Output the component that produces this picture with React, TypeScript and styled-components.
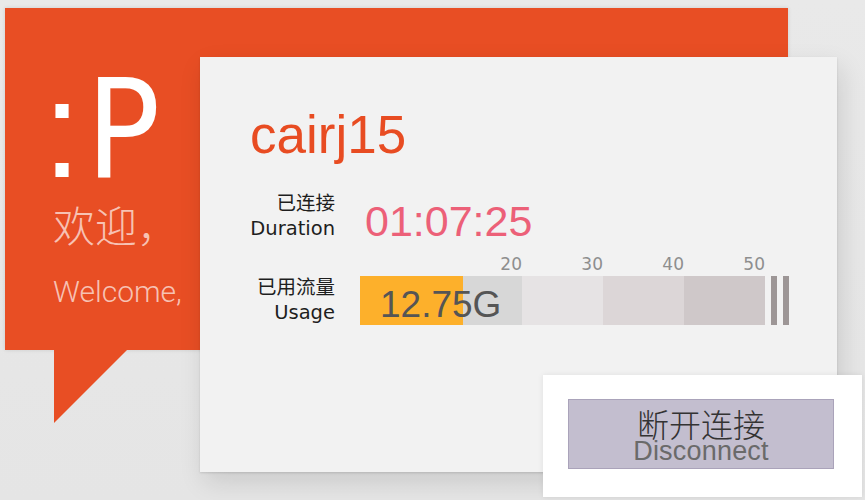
import React from "react";
import styled, { createGlobalStyle } from "styled-components";

const Global = createGlobalStyle`
  html, body { margin: 0; padding: 0; }
  body {
    background: #e6e6e6;
    font-family: "Liberation Sans", "Noto Sans CJK SC", sans-serif;
  }
`;

const Stage = styled.div`
  position: relative;
  width: 865px;
  height: 500px;
  overflow: hidden;
  background: linear-gradient(180deg, #e9e9e9 0%, #e5e5e5 100%);
`;

const Bubble = styled.div`
  position: relative;
  margin: 8px 0 0 5px;
  width: 783px;
  height: 342px;
  box-sizing: border-box;
  padding: 62px 0 0 38px;
  background: #e84e24;
  box-shadow: 0 0 4px rgba(0, 0, 0, 0.12);
  display: flex;
  flex-direction: column;
  &::after {
    content: "";
    position: absolute;
    left: 49px;
    top: 342px;
    border-top: 73px solid #e84e24;
    border-right: 73px solid transparent;
  }
`;

const Face = styled.div`
  display: flex;
  align-items: baseline;
  font-size: 137px;
  line-height: 120px;
  height: 120px;
  color: #ffffff;
`;

const Colon = styled.span`
  font-family: "Liberation Sans", sans-serif;
  font-weight: 400;
`;

const Tongue = styled.span`
  margin-left: 5px;
  font-family: "Liberation Sans Narrow", "DejaVu Sans Condensed", "Liberation Sans", sans-serif;
  font-stretch: condensed;
  font-weight: 400;
`;

const WelcomeCn = styled.div`
  margin-top: 13px;
  font-family: "Noto Sans CJK SC", sans-serif;
  font-weight: 300;
  font-size: 42px;
  line-height: 1;
  color: rgba(255, 255, 255, 0.66);
  padding-left: 10px;
`;

const WelcomeEn = styled.div`
  margin-top: 32px;
  font-family: Roboto, "Liberation Sans", sans-serif;
  font-weight: 300;
  font-size: 30px;
  line-height: 1;
  color: rgba(255, 255, 255, 0.66);
  padding-left: 10px;
`;

const Card = styled.div`
  position: absolute;
  left: 200px;
  top: 57px;
  width: 637px;
  height: 415px;
  box-sizing: border-box;
  padding: 51px 0 0 48px;
  background: #f2f2f2;
  box-shadow: 0 1px 2px rgba(0, 0, 0, 0.12), 4px 10px 24px rgba(0, 0, 0, 0.12);
  display: flex;
  flex-direction: column;
  &::before {
    content: "";
    position: absolute;
    left: -170px;
    bottom: -28px;
    width: 520px;
    height: 60px;
    border-radius: 50%;
    background: radial-gradient(ellipse at center, rgba(0, 0, 0, 0.1), rgba(0, 0, 0, 0) 70%);
    z-index: -1;
  }
`;

const UserName = styled.div`
  padding-left: 2px;
  font-size: 53px;
  line-height: 1;
  color: #e84c22;
`;

const InfoRow = styled.div<{ $top: number }>`
  margin-top: ${(p) => p.$top}px;
  display: grid;
  grid-template-columns: 87px auto;
  column-gap: 25px;
  align-items: center;
`;

const Label = styled.div`
  text-align: right;
  font-family: "DejaVu Sans", "Noto Sans CJK SC", sans-serif;
  font-size: 19.5px;
  line-height: 25px;
  color: #1e1e1e;
  white-space: nowrap;
`;

const Duration = styled.div`
  padding: 11px 0 0 5px;
  font-size: 43px;
  line-height: 1;
  color: #ec6078;
`;

const Ticks = styled.div`
  grid-column: 2;
  display: grid;
  grid-template-columns: repeat(5, 81px);
  height: 20px;
`;

const Tick = styled.span`
  text-align: right;
  font-family: "DejaVu Sans", sans-serif;
  font-size: 17px;
  line-height: 18px;
  color: #8e8e8e;
`;

const Meter = styled.div`
  display: flex;
  align-items: stretch;
  height: 49px;
  gap: 6px;
`;

const Track = styled.div`
  position: relative;
  width: 405px;
  display: flex;
`;

const Segment = styled.div<{ $c: string }>`
  width: 81px;
  background: ${(p) => p.$c};
`;

const Fill = styled.div`
  position: absolute;
  left: 0;
  top: 0;
  bottom: 0;
  background: #fdb02b;
`;

const Amount = styled.div`
  position: absolute;
  left: 20px;
  top: 10px;
  font-size: 37px;
  line-height: 1;
  color: #555555;
`;

const EndBar = styled.div`
  width: 6px;
  background: #9d9696;
`;

const Panel = styled.div`
  position: absolute;
  left: 543px;
  top: 375px;
  width: 319px;
  height: 122px;
  box-sizing: border-box;
  padding: 24px 0 0 25px;
  background: #ffffff;
  box-shadow: 0 0 6px rgba(0, 0, 0, 0.08);
`;

const Button = styled.button`
  width: 266px;
  height: 70px;
  box-sizing: border-box;
  margin: 0;
  padding: 7px 0 0;
  background: #c3becf;
  border: 1px solid #aaa3ba;
  display: flex;
  flex-direction: column;
  align-items: center;
  justify-content: flex-start;
  cursor: pointer;
`;

const BtnCn = styled.span`
  font-family: "Noto Sans CJK SC", sans-serif;
  font-weight: 300;
  font-size: 32px;
  line-height: 32px;
  color: #333333;
`;

const BtnEn = styled.span`
  font-family: "Liberation Sans", sans-serif;
  font-size: 27px;
  line-height: 24px;
  letter-spacing: 0.2px;
  color: #6a6a6a;
`;

const used = 12.75;
const max = 50;

export default function App() {
  return (
    <>
      <Global />
      <Stage>
        <Bubble>
          <Face>
            <Colon>:</Colon>
            <Tongue>P</Tongue>
          </Face>
          <WelcomeCn>欢迎，</WelcomeCn>
          <WelcomeEn>Welcome,</WelcomeEn>
        </Bubble>
        <Card>
          <UserName>cairj15</UserName>
          <InfoRow $top={28}>
            <Label>
              已连接
              <br />
              Duration
            </Label>
            <Duration>01:07:25</Duration>
          </InfoRow>
          <InfoRow $top={12}>
            <Ticks>
              {["", "20", "30", "40", "50"].map((t, i) => (
                <Tick key={i}>{t}</Tick>
              ))}
            </Ticks>
            <Label>
              已用流量
              <br />
              Usage
            </Label>
            <Meter>
              <Track>
                <Segment $c="#d7d7d7" />
                <Segment $c="#d7d7d7" />
                <Segment $c="#e6e3e4" />
                <Segment $c="#dcd6d7" />
                <Segment $c="#cfc8c9" />
                <Fill style={{ width: `${(used / max) * 405}px` }} />
                <Amount>12.75G</Amount>
              </Track>
              <EndBar />
              <EndBar />
            </Meter>
          </InfoRow>
        </Card>
        <Panel>
          <Button>
            <BtnCn>断开连接</BtnCn>
            <BtnEn>Disconnect</BtnEn>
          </Button>
        </Panel>
      </Stage>
    </>
  );
}
